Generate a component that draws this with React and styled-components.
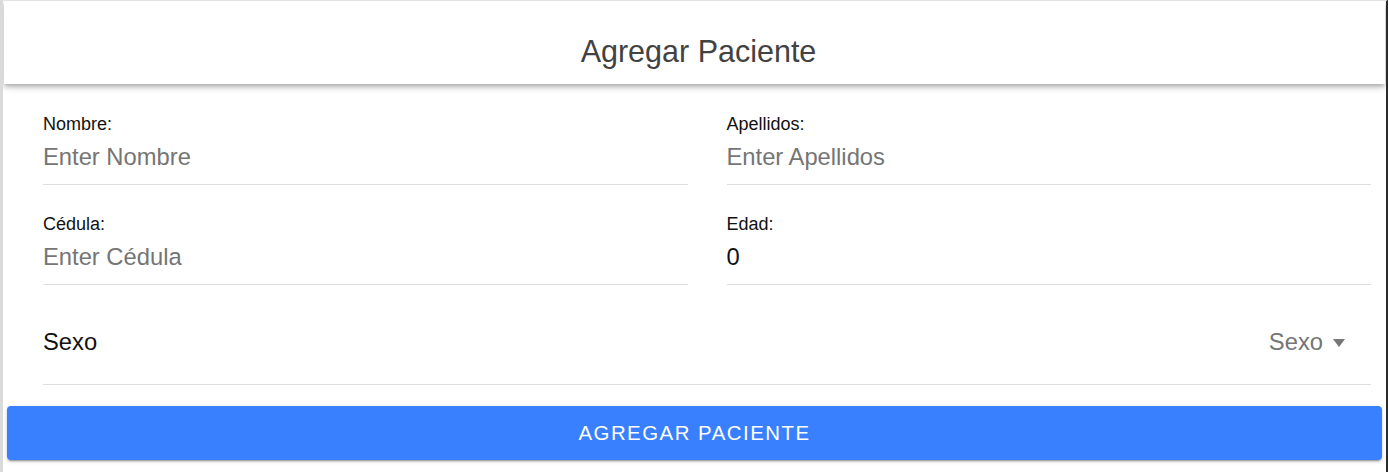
import React from "react";
import styled, { createGlobalStyle } from "styled-components";

const Global = createGlobalStyle`
  html, body { margin: 0; padding: 0; background: #fff; }
  body { font-family: "Liberation Sans", Arial, sans-serif; }
  * { box-sizing: border-box; }
`;

const Page = styled.div`
  height: 472px;
  overflow: hidden;
  border-top: 1px solid #e3e3e3;
  border-left: 3px solid #dadada;
  border-right: 2px solid #2b2b2b;
  background: #fff;
  display: flex;
  flex-direction: column;
`;

const Header = styled.header`
  position: relative;
  z-index: 2;
  height: 83px;
  padding: 16px 0 0 8px;
  margin-left: 1px;
  margin-right: 1px;
  display: flex;
  align-items: center;
  justify-content: center;
  background: #fff;
  box-shadow: 0 2px 4px -1px rgba(0, 0, 0, 0.2), 0 4px 5px 0 rgba(0, 0, 0, 0.14),
    0 1px 10px 0 rgba(0, 0, 0, 0.12);
`;

const Title = styled.h1`
  margin: 0;
  font-size: 30.5px;
  line-height: 36px;
  font-weight: 400;
  color: #424242;
`;

const Form = styled.form`
  display: flex;
  flex-direction: column;
  padding: 1px 15px 0 40px;
`;

const Grid = styled.div`
  display: grid;
  grid-template-columns: 1fr 1fr;
  column-gap: 39px;
`;

const Field = styled.label`
  display: flex;
  flex-direction: column;
  padding: 29px 0 13px;
  border-bottom: 1px solid #dedede;
`;

const Label = styled.span`
  font-size: 18px;
  line-height: 21px;
  color: #111;
  margin-bottom: 8px;
`;

const Input = styled.input`
  border: none;
  outline: none;
  padding: 0;
  margin: 0;
  background: transparent;
  font-family: "Liberation Sans", Arial, sans-serif;
  font-size: 23.75px;
  line-height: 28px;
  height: 28px;
  color: #111;
  &::placeholder {
    color: #757575;
  }
`;

const SelectRow = styled.div`
  display: flex;
  align-items: center;
  justify-content: space-between;
  padding: 43px 26px 28px 0;
  border-bottom: 1px solid #dedede;
`;

const RowText = styled.span`
  font-size: 23.75px;
  line-height: 28px;
  color: ${(p) => (p.$muted ? "#757575" : "#111")};
`;

const SelectValue = styled.div`
  display: flex;
  align-items: center;
  gap: 10px;
`;

const Caret = styled.span`
  width: 0;
  height: 0;
  border-left: 6.5px solid transparent;
  border-right: 6.5px solid transparent;
  border-top: 8px solid #777;
  margin-top: 1px;
`;

const Button = styled.button`
  margin: 21px 4px 0;
  height: 54px;
  border: none;
  border-radius: 4px;
  background: #3880ff;
  color: #fff;
  font-family: "Liberation Sans", Arial, sans-serif;
  font-size: 20.4px;
  letter-spacing: 1.5px;
  text-transform: uppercase;
  box-shadow: 0 3px 1px -2px rgba(0, 0, 0, 0.2), 0 2px 2px 0 rgba(0, 0, 0, 0.14),
    0 1px 5px 0 rgba(0, 0, 0, 0.12);
  cursor: pointer;
`;

const fields = [
  { label: "Nombre:", placeholder: "Enter Nombre" },
  { label: "Apellidos:", placeholder: "Enter Apellidos" },
  { label: "Cédula:", placeholder: "Enter Cédula" },
  { label: "Edad:", value: "0" },
];

export default function App() {
  return (
    <>
      <Global />
      <Page>
        <Header>
          <Title>Agregar Paciente</Title>
        </Header>
        <Form onSubmit={(e) => e.preventDefault()}>
          <Grid>
            {fields.map((f) => (
              <Field key={f.label}>
                <Label>{f.label}</Label>
                <Input placeholder={f.placeholder} defaultValue={f.value} />
              </Field>
            ))}
          </Grid>
          <SelectRow>
            <RowText>Sexo</RowText>
            <SelectValue>
              <RowText $muted>Sexo</RowText>
              <Caret />
            </SelectValue>
          </SelectRow>
        </Form>
        <Button type="button">Agregar Paciente</Button>
      </Page>
    </>
  );
}
